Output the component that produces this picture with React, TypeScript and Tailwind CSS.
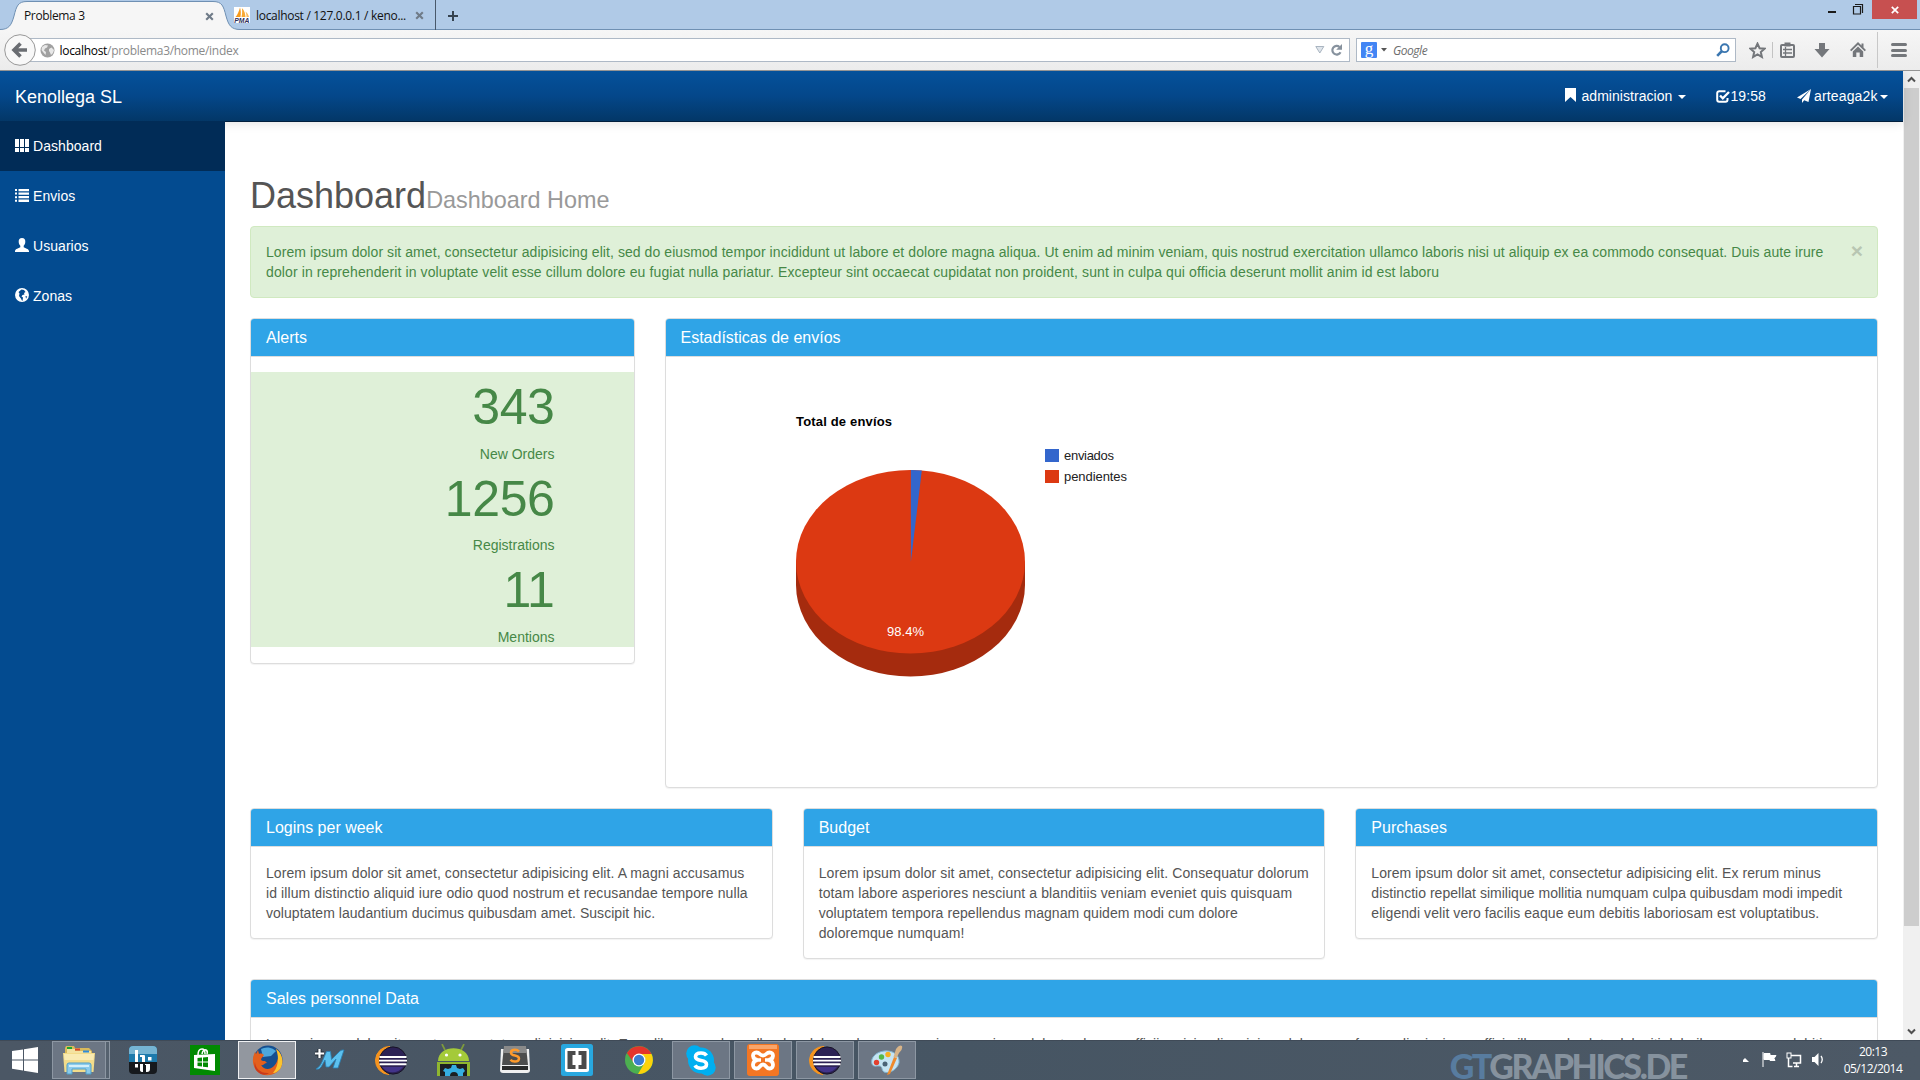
import React from "react";

const ARIAL = "font-['Liberation_Sans',Arial,sans-serif]";
const SEGOE = "font-['Open_Sans','Noto_Sans',sans-serif]";

/* ---------- Browser window ---------- */

function TabClose() {
  return (
    <svg className="shrink-0" width="9" height="9" viewBox="0 0 9 9">
      <path d="M1.2 1.2l6.6 6.6M7.8 1.2l-6.6 6.6" stroke="#6f7b88" strokeWidth="2.1" />
    </svg>
  );
}

function PmaIcon() {
  return (
    <svg className="shrink-0" width="16" height="16" viewBox="0 0 16 16">
      <rect width="16" height="16" fill="#fff" />
      <path d="M1.500 10C3.500 8 5 4 6 .5c1 3 1 6 .5 9.500z" fill="#f79a1c" />
      <path d="M7.500 10c.8-3 .8-6 .4-9 2.600 2.500 3.400 6 3.600 9z" fill="#f9a933" />
      <path d="M12.500 10c0-2-.3-4-1-5.500 2 1.500 3 3.500 3.500 5.500z" fill="#f9b95c" />
      <text x="0.300" y="15.800" fontSize="6.800" fontWeight="700" fontStyle="italic" fontFamily="Liberation Sans" fill="#2f2f5c">PMA</text>
    </svg>
  );
}

function TabStrip() {
  return (
    <div className="flex h-[30px] shrink-0 bg-[#b0cae7] text-[12px] text-[#111]">
      <div className="relative h-[30px] w-[240px] shrink-0">
        <svg className="absolute left-0 top-0" width="240" height="30" viewBox="0 0 240 30">
          <path d="M0 29.500C9 29.500 11.500 25 14 16 16.500 6 18 1.500 27 1.500H213c9 0 10.500 4.500 13 14.500 2.500 9 5 13.500 14 13.500V31H0z" fill="#f6f6f6" />
          <path d="M0 29.500C9 29.500 11.500 25 14 16 16.500 6 18 1.500 27 1.500H213c9 0 10.500 4.500 13 14.500 2.500 9 5 13.500 14 13.500" fill="none" stroke="#6f90b3" />
        </svg>
        <div className="relative flex h-8 items-center justify-between pl-6 pr-[26px]">
          <span className="tracking-[-0.35px]">Problema 3</span>
          <TabClose />
        </div>
      </div>
      <div className="-ml-1.5 flex h-[30px] w-[201px] shrink-0 items-center border-b border-[#6f90b3]">
        <PmaIcon />
        <span className="ml-1.5 w-[151px] whitespace-nowrap pt-0.5 tracking-[-0.3px]">localhost / 127.0.0.1 / keno...</span>
        <span className="ml-2 flex pt-0.5"><TabClose /></span>
      </div>
      <div className="h-[30px] w-px bg-[#48586a]" />
      <div className="flex h-[30px] flex-1 justify-between border-b border-[#6f90b3]">
        <svg className="ml-3 mt-[11px]" width="10" height="10" viewBox="0 0 10 10">
          <path d="M5 0v10M0 5h10" stroke="#35424f" strokeWidth="2" />
        </svg>
        <div className="flex">
          <svg width="60" height="20" viewBox="0 0 60 20">
            <path d="M16 12h8" stroke="#1b1b1b" strokeWidth="2" />
            <path d="M43 4.500h7.500v8.500M41.500 6.500h7v7.500h-7z" fill="none" stroke="#1b1b1b" strokeWidth="1.200" />
          </svg>
          <div className="mr-[3px] flex h-[19px] w-[45px] items-center justify-center bg-[#c75050]">
            <svg width="8" height="8" viewBox="0 0 8 8">
              <path d="M.8.8l6.400 6.400M7.200.8L.8 7.200" stroke="#fff" strokeWidth="1.700" />
            </svg>
          </div>
        </div>
      </div>
    </div>
  );
}

function Toolbar() {
  return (
    <div className="flex h-[41px] shrink-0 items-center border-b border-[#949494] bg-linear-to-b from-[#f6f6f6] to-[#ececec] text-[12px]">
      <svg className="relative z-10 ml-1 shrink-0" width="32" height="32" viewBox="0 0 32 32">
        <circle cx="16" cy="16" r="15.300" fill="#f8f8f8" stroke="#989898" />
        <path d="M16.500 9.500l-6.500 6.500 6.500 6.500M10.500 16H23" fill="none" stroke="#6a6d72" strokeWidth="3.600" />
      </svg>
      <div className="-ml-2 flex h-6 w-[1322px] items-center border border-[#aeb9c6] bg-white pl-[10.5px]">
        <svg className="shrink-0" width="15" height="15" viewBox="0 0 15 15">
          <circle cx="7.500" cy="7.500" r="7" fill="#a0a0a0" />
          <path d="M2 4l3-2 3 .5-1 2-2 1-1 2 2 1.500-.5 3L3 9 1.500 7zM9 6l2.500-1.500L14 7l-1 3-2 2-1-2.500L9 8z" fill="#e8e8e8" />
        </svg>
        <span className="ml-[5px] whitespace-nowrap pt-0.5 tracking-[-0.3px] text-[#8a8a8a]">
          <span className="text-black">localhost</span>/problema3/home/index
        </span>
        <svg className="ml-auto mr-[6px]" width="28" height="14" viewBox="0 0 28 14">
          <path d="M.8 3.500h8L4.800 10z" fill="#dfe5eb" stroke="#a9b4c0" />
          <path d="M25.500 9.200A4.300 4.300 0 1 1 24.500 4" fill="none" stroke="#87929e" strokeWidth="2.200" />
          <path d="M27 1v5.800h-5.800z" fill="#87929e" />
        </svg>
      </div>
      <div className="ml-1.5 flex h-6 w-[380px] items-center border border-[#aeb9c6] bg-white pl-1">
        <div className="flex h-4 w-4 items-center justify-center rounded-[1px] bg-[#4285f4] pb-1 font-['Liberation_Serif',serif] text-[17px] leading-none text-white">g</div>
        <svg className="ml-1" width="6" height="4" viewBox="0 0 6 4"><path d="M0 0h6L3 3.500z" fill="#555" /></svg>
        <span className="ml-[6px] pt-0.5 italic tracking-[-0.45px] text-[#6d6d6d]">Google</span>
        <svg className="ml-auto mr-[5px]" width="14" height="14" viewBox="0 0 14 14">
          <circle cx="8.700" cy="5.200" r="3.900" fill="none" stroke="#3a76b0" strokeWidth="1.900" />
          <path d="M6 8L1.200 12.800" stroke="#3a76b0" strokeWidth="2.600" />
        </svg>
      </div>
      <svg className="ml-[13px] shrink-0" width="17" height="17" viewBox="0 0 17 17">
        <path d="M8.500 1.600l2.100 4.600 4.900.5-3.700 3.300 1.100 4.900-4.400-2.500-4.400 2.500 1.100-4.900L1.500 6.700l4.900-.5z" fill="none" stroke="#74777b" strokeWidth="2" />
      </svg>
      <div className="ml-[6px] h-4 w-px bg-[#c3c3c3]" />
      <svg className="ml-[7px] shrink-0" width="15" height="16" viewBox="0 0 15 16">
        <rect x="1" y="3" width="13" height="12" rx="1" fill="none" stroke="#74777b" strokeWidth="2" />
        <path d="M4.500 0.500h6v4h-6z" fill="#74777b" />
        <path d="M3 7.500h9M3 11h9M5.500 5v9" stroke="#74777b" strokeWidth="1.300" />
      </svg>
      <svg className="ml-[19px] shrink-0" width="16" height="15" viewBox="0 0 16 15">
        <path d="M5 0h6v6h4.500L8 14.500.5 6H5z" fill="#74777b" />
      </svg>
      <svg className="ml-[20px] shrink-0" width="16" height="16" viewBox="0 0 16 16">
        <path d="M8 0L0 8l1.300 1.300L8 2.800l6.700 6.500L16 8l-2.500-2.500V1.500h-2v2z" fill="#74777b" />
        <path d="M8 4.500l5.200 5V15H9.700v-4.500H6.300V15H2.800V9.500z" fill="#74777b" />
      </svg>
      <div className="ml-[11px] h-9 w-px bg-[#c8c8c8]" />
      <div className="ml-[13px] flex w-4 flex-col gap-[2.5px]">
        <div className="h-[3px] rounded-sm bg-[#74777b]" />
        <div className="h-[3px] rounded-sm bg-[#74777b]" />
        <div className="h-[3px] rounded-sm bg-[#74777b]" />
      </div>
    </div>
  );
}

/* ---------- Web page ---------- */

function Caret() {
  return <svg width="8" height="4" viewBox="0 0 8 4"><path d="M0 0h8L4 4z" fill="#fff" /></svg>;
}

function Navbar() {
  return (
    <div className="relative z-10 flex h-[51px] shrink-0 items-center border-b border-[#011f3d] bg-linear-to-b from-[#04519b] via-[#04478a] to-[#033767] px-[15px] pt-px text-[14px] text-white shadow-[0_1px_10px_rgba(0,0,0,0.12)]">
      <div className="text-[18px] leading-5">Kenollega SL</div>
      <div className="ml-auto flex items-center">
        <svg className="-mt-1" width="11" height="14" viewBox="0 0 11 14"><path d="M0 0h11v14L5.500 9 0 14z" fill="#fff" /></svg>
        <span className="ml-[5px] w-[97px] tracking-[0.05px]">administracion</span>
        <Caret />
      </div>
      <div className="ml-[30px] flex items-center">
        <svg width="14" height="13" viewBox="0 0 14 13">
          <path d="M9.500 1.200H3.200a2 2 0 0 0-2 2v6.500a2 2 0 0 0 2 2h6.300a2 2 0 0 0 2-2V8" fill="none" stroke="#fff" strokeWidth="2" />
          <path d="M4 5.500L6.800 8.300 13 2" fill="none" stroke="#fff" strokeWidth="2.400" />
        </svg>
        <span className="tracking-[0.1px]">19:58</span>
      </div>
      <div className="ml-[31px] flex items-center">
        <svg className="-mt-0.5" width="14" height="14" viewBox="0 0 14 14">
          <path d="M14 0L0 8.500l3.500 1.500zM14 0L5 10.500V14l2.200-2.800L11.500 13z" fill="#fff" />
        </svg>
        <span className="ml-[3px] w-[66px] tracking-[0.15px]">arteaga2k</span>
        <Caret />
      </div>
    </div>
  );
}

const icons = {
  grid: <path d="M0 0h4v8H0zM5 0h4v8H5zM10 0h4v8h-4zM0 9h4v4H0zM5 9h4v4H5zM10 9h4v4h-4z" fill="#fff" />,
  list: <path d="M0 0h2v2H0zM3.500 0H14v2.200H3.500zM0 3.600h2v2H0zM3.500 3.500H14v2.200H3.500zM0 7.200h2v2H0zM3.500 7H14v2.300H3.500zM0 10.800h2v2H0zM3.500 10.600H14v2.300H3.500z" fill="#fff" />,
  user: <path d="M7 0c2.300 0 3.500 1.600 3.300 4-.1 1.700-.8 3-1.600 3.800v1.500c1.500 1 4.800 1.500 5.300 3.700v1H0v-1c.5-2.200 3.800-2.700 5.300-3.700V7.800C4.500 7 3.800 5.700 3.700 4 3.500 1.600 4.700 0 7 0z" fill="#fff" />,
  globe: (
    <>
      <circle cx="7" cy="7" r="6.200" fill="#fff" stroke="#fff" strokeWidth="1.500" />
      <path d="M6.500 1.500l2.500.5 1.500 2-1.500 1 .5 1.500-2 .5-1 1.500 1.500 1-.5 3.500c-1-.5-1-2-2-3L4 8l.5-2.500L3.500 4z" fill="#054b8f" />
      <path d="M10.500 8l1.700.5-1.200 2.200z" fill="#054b8f" />
    </>
  ),
};

const navItems = [
  { label: "Dashboard", icon: icons.grid, active: true, nudge: "" },
  { label: "Envios", icon: icons.list, nudge: "" },
  { label: "Usuarios", icon: icons.user, nudge: "-mt-0.5" },
  { label: "Zonas", icon: icons.globe, nudge: "-mt-0.5" },
];

function Sidebar() {
  return (
    <div className="relative z-20 -mt-px w-[225px] shrink-0 bg-[#034b90] text-[14px] text-white">
      {navItems.map((n) => (
        <div key={n.label} className={"flex h-[50px] items-center pl-[15px] " + (n.active ? "bg-[#012c57]" : "")}>
          <svg className={n.nudge} width="14" height="14" viewBox="0 0 14 14">{n.icon}</svg>
          <span className="ml-1 tracking-[0.05px]">{n.label}</span>
        </div>
      ))}
    </div>
  );
}

function Panel({ title, className, children }: { title: string; className: string; children: React.ReactNode }) {
  return (
    <div className={"rounded-[4px] border border-[#ddd] bg-white shadow-[0_1px_1px_rgba(0,0,0,0.05)] " + className}>
      <div className="h-[38px] rounded-t-[3px] border-b border-[#ddd] bg-[#2fa4e7] px-[15px] pt-[10px] text-[16px] leading-[18px] text-white">
        {title}
      </div>
      {children}
    </div>
  );
}

type Line = { text: string; fit: string };

function Lines({ lines }: { lines: Line[] }) {
  return (
    <div className="whitespace-nowrap px-[15px] pb-[15px] pt-4 leading-5">
      {lines.map((l) => <div key={l.text} className={l.fit}>{l.text}</div>)}
    </div>
  );
}

const stats = [
  ["343", "New Orders"],
  ["1256", "Registrations"],
  ["11", "Mentions"],
];

function PieChart() {
  return (
    <svg width="600" height="400" viewBox="681 372 600 400" fontFamily="Liberation Sans">
      <text x="796" y="426" fontSize="13" fontWeight="700" textLength="96">Total de envíos</text>
      <path d="M796 561.700v23A114.500 91.700 0 0 0 1025 584.700v-23z" fill="#a52b0e" />
      <ellipse cx="910.500" cy="561.700" rx="114.500" ry="91.700" fill="#dc3912" />
      <path d="M910.900 561.700V470A114.500 91.700 0 0 1 921.800 470.500z" fill="#3366cc" />
      <text x="887" y="636" fontSize="13" fill="#fff" textLength="37">98.4%</text>
      <rect x="1045" y="449" width="14" height="13" fill="#3366cc" />
      <text x="1064" y="460" fontSize="13" fill="#222" textLength="50">enviados</text>
      <rect x="1045" y="470" width="14" height="13" fill="#dc3912" />
      <text x="1064" y="481" fontSize="13" fill="#222" textLength="63">pendientes</text>
    </svg>
  );
}

const infoPanels: { title: string; lines: Line[] }[] = [
  {
    title: "Logins per week",
    lines: [
      { text: "Lorem ipsum dolor sit amet, consectetur adipisicing elit. A magni accusamus", fit: "tracking-[0.08px]" },
      { text: "id illum distinctio aliquid iure odio quod nostrum et recusandae tempore nulla", fit: "tracking-[0.09px]" },
      { text: "voluptatem laudantium ducimus quibusdam amet. Suscipit hic.", fit: "tracking-[0.04px]" },
    ],
  },
  {
    title: "Budget",
    lines: [
      { text: "Lorem ipsum dolor sit amet, consectetur adipisicing elit. Consequatur dolorum", fit: "tracking-[0.1px]" },
      { text: "totam labore asperiores nesciunt a blanditiis veniam eveniet quis quisquam", fit: "tracking-[0.11px]" },
      { text: "voluptatem tempora repellendus magnam quidem modi cum dolore", fit: "tracking-[0.06px]" },
      { text: "doloremque numquam!", fit: "tracking-[0.1px]" },
    ],
  },
  {
    title: "Purchases",
    lines: [
      { text: "Lorem ipsum dolor sit amet, consectetur adipisicing elit. Ex rerum minus", fit: "tracking-[0.05px]" },
      { text: "distinctio repellat similique mollitia numquam culpa quibusdam modi impedit", fit: "tracking-[0.02px]" },
      { text: "eligendi velit vero facilis eaque eum debitis laboriosam est voluptatibus.", fit: "tracking-[0.07px]" },
    ],
  },
];

function Content() {
  return (
    <div className="flex-1 overflow-hidden bg-white px-[25px] pt-[54px] text-[14px] text-[#555]">
      <h1 className="flex items-baseline whitespace-nowrap text-[36px] leading-[40px]">
        Dashboard<small className="text-[23.400px] text-[#999]">Dashboard Home</small>
      </h1>
      <div className="mt-[6px] flex h-[72px] justify-between rounded-[4px] border border-[#d0e9c0] bg-[#dff0d8] py-[15px] pl-[15px] pr-[14px] text-[#468847]">
        <div className="whitespace-nowrap leading-5">
          <div className="tracking-[0.07px]">Lorem ipsum dolor sit amet, consectetur adipisicing elit, sed do eiusmod tempor incididunt ut labore et dolore magna aliqua. Ut enim ad minim veniam, quis nostrud exercitation ullamco laboris nisi ut aliquip ex ea commodo consequat. Duis aute irure</div>
          <div className="tracking-[0.107px]">dolor in reprehenderit in voluptate velit esse cillum dolore eu fugiat nulla pariatur. Excepteur sint occaecat cupidatat non proident, sunt in culpa qui officia deserunt mollit anim id est laboru</div>
        </div>
        <span className="text-[21px] font-bold leading-[17px] text-[#b8c6b2]">×</span>
      </div>

      <div className="mt-5 flex items-start gap-[30px]">
        <Panel title="Alerts" className="w-[384.500px] shrink-0">
          <div className="pb-4 pt-[15px]">
            <div className="bg-[#dff0d8] pr-[79px] text-right leading-5 text-[#468847]">
              {stats.map(([n, label]) => (
                <div key={label}>
                  <div className="text-[50px] leading-[71.600px] tracking-[-0.4px]">{n}</div>
                  <div>{label}</div>
                </div>
              ))}
            </div>
          </div>
        </Panel>
        <Panel title="Estadísticas de envíos" className="flex-1">
          <div className="h-[430px] px-[15px] pt-[15px]"><PieChart /></div>
        </Panel>
      </div>

      <div className="mt-5 grid grid-cols-3 items-start gap-[30px]">
        {infoPanels.map((p) => (
          <Panel key={p.title} title={p.title} className="min-w-0"><Lines lines={p.lines} /></Panel>
        ))}
      </div>

      <Panel title="Sales personnel Data" className="mt-5">
        <Lines
          lines={[
            {
              text: "Lorem ipsum dolor sit amet, consectetur adipisicing elit. Error libero quod repellendus dolore ab rerum maxime possimus delectus harum officiis reiciendis minima dolor nam, facere dignissimos officia illo quod soluta deleniti doloribus eaque ex debitis",
              fit: "tracking-[0.08px]",
            },
          ]}
        />
      </Panel>
    </div>
  );
}

function Scrollbar() {
  return (
    <div className="flex w-[17px] shrink-0 flex-col items-center bg-[#f0f0f0]">
      <svg width="17" height="17" viewBox="0 0 17 17"><path d="M5 10.500l3.500-3.500 3.500 3.500" fill="none" stroke="#505050" strokeWidth="2" /></svg>
      <div className="h-[838px] w-[15px] bg-[#cdcdcd]" />
      <svg className="mt-auto" width="17" height="17" viewBox="0 0 17 17"><path d="M5 6.500l3.500 3.500 3.500-3.500" fill="none" stroke="#505050" strokeWidth="2" /></svg>
    </div>
  );
}

/* ---------- Windows taskbar ---------- */

function Explorer() {
  return (
    <svg width="32" height="30" viewBox="0 0 32 30">
      <path d="M2 3l1-2h8l1 2h7l1-0h6l3 3v20H2z" fill="#d8b95c" />
      <path d="M4 4h8v2h16v4H4z" fill="#f4e3a0" />
      <rect x="4" y="2" width="5" height="2" fill="#1fa52e" />
      <rect x="12" y="3.500" width="5" height="2" fill="#d9442b" />
      <rect x="20" y="5.500" width="6" height="2" fill="#2e8bd8" />
      <path d="M0 8h32l-1.500 19h-29z" fill="#f3dc8a" />
      <path d="M1 9h30l-.5 6h-29z" fill="#f9ebb2" />
      <path d="M4 29V20q0-2 2-2h20q2 0 2 2v9h-5v-5H9v5z" fill="#8ccbeb" stroke="#4f9fca" />
      <path d="M6 20h20v2H6z" fill="#d3eefa" />
    </svg>
  );
}

function HootIcon() {
  return (
    <svg width="28" height="28" viewBox="0 0 28 28">
      <rect width="28" height="28" rx="4" fill="#16191d" />
      <path d="M0 16V4a4 4 0 0 1 4-4h20a4 4 0 0 1 4 4v12z" fill="#1d7aac" />
      <path d="M0 8V4a4 4 0 0 1 4-4h20a4 4 0 0 1 4 4v4z" fill="#75b4d3" />
      <path d="M6 4h3v12H6zM11 9h4q1 0 1 1v6h-3v-5h-2zM19 11h3.500v3.500H19zM6 18h3v3.500H6zM11 18h3v8q-3 0-3-2zM16 18h5v5q0 3-3 3h-1v-7h-1z" fill="#fff" />
    </svg>
  );
}

function StoreIcon() {
  return (
    <svg width="30" height="30" viewBox="0 0 30 30">
      <rect width="30" height="30" fill="#018a01" />
      <path d="M4 10l21-1v17L4 23z" fill="#fff" />
      <path d="M8 10q0-6 4-6 3 0 3 5M12 9q1-5 4-4 2 1 1 4" fill="none" stroke="#fff" strokeWidth="1.500" />
      <path d="M7.500 13l4.500-.5v4H7.500zM13 12.400l5-.4v4.500h-5zM7.500 17.500H12v4l-4.500-.6zM13 17.500h5v4.800l-5-.6z" fill="#018a01" />
    </svg>
  );
}

function FirefoxIcon() {
  return (
    <svg width="31" height="31" viewBox="0 0 31 31">
      <circle cx="16" cy="15" r="14.500" fill="#164f8f" />
      <path d="M9 4a13 13 0 0 1 15 2l-5 5-8 1z" fill="#4da7dc" />
      <path d="M24 4c7 5 8 14 4 20C23 31 11 33 4 25-1 18 1 11 3 7l1 2 2-4 1 4c2-1 4 0 5 1l-3 4c0 2 2 2 4 2l2 2c-3 0-3 3-6 2 3 5 9 5 13 1 5-5 5-12 2-17z" fill="#e4601d" />
      <path d="M24 4c7 5 8 14 4 20-2 2-4 4-7 4 6-7 6-17 3-24z" fill="#fbc42e" />
      <path d="M3 17c0 6 6 12 14 11-6 5-17-2-14-11z" fill="#c93a1b" />
    </svg>
  );
}

function MIcon() {
  return (
    <svg width="32" height="24" viewBox="0 0 32 24">
      <path d="M3 21Q7 19 9 14L13.500 3.500h4l1 8L27 3q2-1.500 4-1L25 20h-5l3-9-7 8h-3l-1-7-4 7q-2 3-5 2z" fill="#5cc1ef" stroke="#2880b5" strokeWidth=".8" />
      <path d="M6.500 1v9M2 5.500h9" stroke="#222b33" strokeWidth="4" />
      <path d="M6.500 1v9M2 5.500h9" stroke="#fff" strokeWidth="2.200" />
    </svg>
  );
}

function EclipseIcon() {
  return (
    <svg width="32" height="29" viewBox="0 0 32 29">
      <path d="M15 .5A14 14 0 0 0 14 28.500Q4 23 4 14.500T15 .5z" fill="#f7941e" stroke="#f7941e" />
      <circle cx="18" cy="14.500" r="13.600" fill="#2c2255" stroke="#171226" />
      <path d="M7 21a13 13 0 0 0 21 0z" fill="#42348a" />
      <path d="M4.500 11h27M4 14.600h28M4.500 18.200h27" stroke="#fff" strokeWidth="1.900" />
    </svg>
  );
}

function AndroidIcon() {
  return (
    <svg width="33" height="32" viewBox="0 0 33 32">
      <path d="M8 6L5 0M24 6l3-6" stroke="#7d9a3c" strokeWidth="1.700" />
      <path d="M1 17C1 0 32 0 32 17z" fill="#a4ca39" />
      <circle cx="9.500" cy="11" r="1.600" fill="#fff" /><circle cx="23" cy="11" r="1.600" fill="#fff" />
      <path d="M0 18h33v14H0z" fill="#8fb62f" />
      <path d="M3 20h27v12H3z" fill="#1c1f22" />
      <path d="M8 32v-4l-2-1 2-3 3 1 3-1 1-3h4l1 3 3 1 3-1 2 3-2 2v3h-5a4 4 0 0 0-8 0z" fill="#35aee2" />
    </svg>
  );
}

function SublimeIcon() {
  return (
    <svg width="30" height="28" viewBox="0 0 30 28">
      <path d="M1 3h28l1 21q0 3-3 3H3q-3 0-3-3z" fill="#f0f0f0" />
      <path d="M4 0h22l2 19H2z" fill="#4d4d4d" />
      <path d="M4 0h22l.5 7h-23z" fill="#8a8a8a" />
      <path d="M2 20h26v4H2z" fill="#2b2b2b" />
      <path d="M19 5.500Q17.500 3.800 15 3.800q-4 0-4 2.900 0 2 4 2.800t4 3q0 3-4.200 3-2.800 0-4.300-1.800" fill="none" stroke="#ff9a2b" strokeWidth="2.500" />
    </svg>
  );
}

function BracketsIcon() {
  return (
    <svg width="32" height="32" viewBox="0 0 32 32">
      <rect width="32" height="32" rx="2.500" fill="#28a8e0" />
      <rect x="4" y="4" width="24" height="24" rx="2.500" fill="#fff" />
      <path d="M14.500 7H6.500v18h8v-4h-3V11h3zM17.500 7h8v18h-8v-4h3V11h-3z" fill="#4a4a4a" />
    </svg>
  );
}

function ChromeIcon() {
  return (
    <svg width="28" height="28" viewBox="0 0 28 28">
      <circle cx="14" cy="14" r="14" fill="#4caf50" />
      <path d="M1.900 7A14 14 0 0 1 26.500 8H14a6 6 0 0 0-5.500 8.500z" fill="#e3352b" />
      <path d="M26.500 8A14 14 0 0 1 13 28l6.500-11A6 6 0 0 0 14 8z" fill="#fdd20a" />
      <circle cx="14" cy="14" r="6.500" fill="#fff" />
      <circle cx="14" cy="14" r="5.200" fill="#3b7dd0" />
    </svg>
  );
}

function SkypeIcon() {
  return (
    <svg width="30" height="31" viewBox="0 0 30 31">
      <circle cx="8.500" cy="8.500" r="8.300" fill="#00aff0" /><circle cx="21.500" cy="22.500" r="8.200" fill="#00aff0" />
      <circle cx="15" cy="15.500" r="13" fill="#00aff0" />
      <path d="M20.500 10.500Q19 8 15 8q-5.500 0-5.500 3.800 0 2.800 5.500 3.700t5.500 3.800q0 3.900-5.500 3.900-4.500 0-6-2.800" fill="none" stroke="#fff" strokeWidth="3.600" />
    </svg>
  );
}

function XamppIcon() {
  return (
    <svg width="32" height="32" viewBox="0 0 32 32">
      <rect width="32" height="32" rx="3" fill="#f37623" />
      <path d="M2 1h28v4H2z" fill="#f9a56b" />
      <path
        d="M10.500 16C5 15.500 4.500 8.500 9.500 8.500c3.500 0 3 3 6.500 3s3-3 6.500-3c5 0 4.500 7-1 7.500M10.500 16C5 16.500 4.500 24.500 9.500 24.500c4 0 3-4 6.500-4s2.500 4 6.500 4c5 0 4.500-8-1-8.500"
        fill="none"
        stroke="#fff"
        strokeWidth="3.800"
      />
      <path d="M10 16h4M18 16h4" stroke="#fff" strokeWidth="3.600" />
    </svg>
  );
}

function PaintIcon() {
  return (
    <svg width="32" height="31" viewBox="0 0 32 31">
      <path d="M13 6C4 7-1 14 1 19c1 3 4 2 7 2 4 0 2 4 5 6 5 2 13-2 15-9C29 10 22 5 13 6z" fill="#c5e4f4" stroke="#7fb1cc" />
      <circle cx="5.500" cy="17.500" r="2.700" fill="#e2412f" />
      <circle cx="10.500" cy="12" r="2.700" fill="#54b948" />
      <circle cx="17" cy="9.500" r="2.700" fill="#f6b01f" />
      <circle cx="14" cy="19" r="2.500" fill="#4a6377" />
      <path d="M16 30l7-18 3 1-7 16z" fill="#ee8a2c" />
      <path d="M22.500 12L25 4q3-5 6-3 1 4-3 7l-2.500 5z" fill="#d8b488" />
    </svg>
  );
}

const OPEN = "border border-[#8d97a3] bg-[#6c7684]";

const apps = [
  { name: "htc", icon: <HootIcon />, frame: "" },
  { name: "store", icon: <StoreIcon />, frame: "" },
  { name: "firefox", icon: <FirefoxIcon />, frame: "border border-[#f0f1f3] bg-[#92979f]" },
  { name: "m", icon: <MIcon />, frame: "" },
  { name: "eclipse", icon: <EclipseIcon />, frame: "" },
  { name: "android", icon: <AndroidIcon />, frame: "" },
  { name: "sublime", icon: <SublimeIcon />, frame: "" },
  { name: "brackets", icon: <BracketsIcon />, frame: "" },
  { name: "chrome", icon: <ChromeIcon />, frame: "" },
  { name: "skype", icon: <SkypeIcon />, frame: OPEN },
  { name: "xampp", icon: <XamppIcon />, frame: OPEN },
  { name: "eclipse-running", icon: <EclipseIcon />, frame: OPEN },
  { name: "paint", icon: <PaintIcon />, frame: OPEN },
];

function Taskbar() {
  return (
    <div className="flex h-10 shrink-0 items-center overflow-hidden bg-[#4b5866] bg-linear-to-r from-[#4b5765] via-[#465563] to-[#4d5966] shadow-[inset_0_1px_0_#3f4a57]">
      <svg className="ml-3 shrink-0" width="26" height="26" viewBox="0 0 26 26">
        <path d="M0 4l11-1.600V12.500H0zM12 2.200L26 0v12.500H12zM0 13.500h11v9.900L0 21.800zM12 13.500h14V26l-14-2.200z" fill="#fff" />
      </svg>
      <div className={"ml-[14px] flex h-[38px] w-[54px] shrink-0 items-center justify-center " + OPEN}><Explorer /></div>
      <div className="h-[38px] w-1 shrink-0 border-y border-r border-[#8d97a3] bg-[#56626f]" />
      <div className="ml-0.5 flex shrink-0">
        {apps.map((a) => (
          <div key={a.name} className="w-[62px] px-0.5">
            <div className={"flex h-[38px] items-center justify-center " + a.frame}>{a.icon}</div>
          </div>
        ))}
      </div>
      <div className="ml-auto mr-[57px] mt-3 h-[26px] whitespace-nowrap font-['Lato',sans-serif] text-[34px] font-black leading-[26px] tracking-[-2.4px] text-[#86929e]">
        <span className="text-[#587c9f]">GT</span>GRAPHICS.DE
      </div>
      <svg className="shrink-0" width="84" height="18" viewBox="1743 1053 84 18">
        <path d="M1740.500 1064h8l-4-4z" transform="translate(0.500 0)" fill="#fff" />
        <path d="M1763 1054v15M1764 1055.500h6v2h6l-2 3 1 2h-5v-1h-6z" fill="#fff" stroke="#fff" />
        <path d="M1790 1057.500h10.500v7.500h-7.500M1794 1068.500h5M1796.500 1065v3M1788.500 1060v8.500h4" fill="none" stroke="#fff" strokeWidth="1.500" />
        <rect x="1787" y="1055" width="4" height="5" fill="#4b5866" stroke="#fff" />
        <path d="M1812 1059h2.500l4-4v13l-4-4h-2.500z" fill="#fff" />
        <path d="M1821 1058q2.500 3.500 0 7" fill="none" stroke="#fff" strokeWidth="1.300" />
      </svg>
      <div className="ml-2 mr-[9px] w-[76px] text-center text-[12px] leading-[17px] tracking-[-0.5px] text-white">
        <div>20:13</div>
        <div>05/12/2014</div>
      </div>
    </div>
  );
}

export default function App() {
  return (
    <div className={"flex h-[1080px] w-[1920px] flex-col overflow-hidden bg-white " + SEGOE}>
      <TabStrip />
      <Toolbar />
      <div className={"flex h-[969px] shrink-0 overflow-hidden " + ARIAL}>
        <div className="flex min-w-0 flex-1 flex-col">
          <Navbar />
          <div className="flex min-h-0 flex-1">
            <Sidebar />
            <Content />
          </div>
        </div>
        <Scrollbar />
      </div>
      <Taskbar />
    </div>
  );
}
